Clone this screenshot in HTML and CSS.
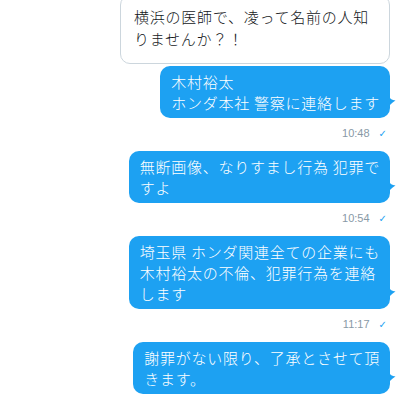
FILE: index.html
```html
<!DOCTYPE html>
<html lang="ja">
<head>
  <meta charset="UTF-8" />
  <meta name="viewport" content="width=400, height=400" />
  <title>DM</title>
  <link rel="stylesheet" href="styles.css">
</head>
<body>

  <!-- ==== CONVERSATION ==== -->
  <div class="thread">

    <div class="card">
      横浜の医師で、凌って名前の人知<br>りませんか？！
    </div>

    <div class="bubble">
      木村裕太<br>ホンダ本社 警察に連絡します
      <svg class="tail" viewBox="0 0 7 10" aria-hidden="true"><path d="M0 0 C1 3 3 4 6.5 4.5 C4 6 2 8 0 10 Z"/></svg>
    </div>
    <div class="meta">10:48 <span class="check">✓</span></div>

    <div class="bubble">
      無断画像、なりすまし行為 犯罪で<br>すよ
      <svg class="tail" viewBox="0 0 7 10" aria-hidden="true"><path d="M0 0 C1 3 3 4 6.5 4.5 C4 6 2 8 0 10 Z"/></svg>
    </div>
    <div class="meta">10:54 <span class="check">✓</span></div>

    <div class="bubble">
      埼玉県 ホンダ関連全ての企業にも<br>木村裕太の不倫、犯罪行為を連絡<br>します
      <svg class="tail" viewBox="0 0 7 10" aria-hidden="true"><path d="M0 0 C1 3 3 4 6.5 4.5 C4 6 2 8 0 10 Z"/></svg>
    </div>
    <div class="meta">11:17 <span class="check">✓</span></div>

    <div class="bubble">
      謝罪がない限り、了承とさせて頂<br>きます。
      <svg class="tail" viewBox="0 0 7 10" aria-hidden="true"><path d="M0 0 C1 3 3 4 6.5 4.5 C4 6 2 8 0 10 Z"/></svg>
    </div>

  </div>

</body>
</html>
```

FILE: styles.css
```css
/* Reset */
* {
  margin: 0;
  padding: 0;
  box-sizing: border-box;
}

html, body {
  width: 400px;
  height: 400px;
  overflow: hidden;
  background: #ffffff;
  font-family: 'Noto Sans CJK JP', 'Noto Sans', sans-serif;
}

/* Message column, everything right aligned */
.thread {
  display: flex;
  flex-direction: column;
  align-items: flex-end;
  padding-right: 10px;
}

/* Incoming message (white, bordered) */
.card {
  width: 270px;
  margin-top: -5px;
  margin-bottom: 2px;
  padding: 10px 12px 13px 13px;
  border: 1px solid #ccd6dd;
  border-radius: 10px;
  background: #ffffff;
  color: #14171a;
  font-size: 15px;
  font-weight: 300;
  line-height: 22px;
  letter-spacing: 0.75px;
}

/* Outgoing message (blue) */
.bubble {
  position: relative;
  padding: 5px 10px 5px 11px;
  border-radius: 10px;
  background: #1da1f2;
  color: #ffffff;
  font-size: 15px;
  font-weight: 300;
  line-height: 21px;
  letter-spacing: 0.75px;
}

/* Little curl on the right edge */
.tail {
  position: absolute;
  right: -6px;
  bottom: 12px;
  width: 7px;
  height: 10px;
  fill: #1da1f2;
}

/* Time + read mark */
.meta {
  margin-top: 7px;
  margin-bottom: 9px;
  padding-right: 3px;
  font-family: 'Liberation Sans', Arial, sans-serif;
  font-size: 11px;
  line-height: 16px;
  color: #8899a6;
}

.check {
  margin-left: 6px;
  font-family: 'DejaVu Sans', sans-serif;
  font-size: 10px;
  color: #1da1f2;
}
```
